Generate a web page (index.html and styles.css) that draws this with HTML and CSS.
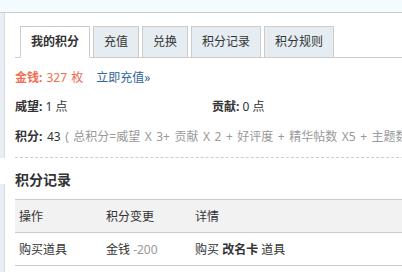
FILE: index.html
```html
<!DOCTYPE html>
<html lang="zh-CN">
<head>
    <meta charset="UTF-8">
    <meta name="viewport" content="width=device-width, initial-scale=1.0">
    <title>我的积分</title>
    <link rel="stylesheet" href="styles.css">
</head>
<body>
    <div class="topbar"></div>
    <div class="wrap">
        <div class="side">
            <div class="side-box first"></div>
            <div class="side-box second"></div>
        </div>
        <div class="main">
            <ul class="tabs">
                <li class="active">我的积分</li>
                <li>充值</li>
                <li>兑换</li>
                <li>积分记录</li>
                <li>积分规则</li>
            </ul>

            <ul class="creditl">
                <li class="money"><em>金钱:</em> 327 枚 <a href="#" class="pay">立即充值»</a></li>
            </ul>
            <ul class="creditl pair">
                <li><em>威望:</em> 1 点</li>
                <li><em>贡献:</em> 0 点</li>
            </ul>
            <ul class="creditl total">
                <li><em>积分:</em> 43 <span class="formula">( 总积分=威望 X 3+ 贡献 X 2 + 好评度 + 精华帖数 X5 + 主题数 X 1 )</span></li>
            </ul>

            <h3 class="section-title">积分记录</h3>
            <table class="logs">
                <colgroup>
                    <col class="c-op">
                    <col class="c-change">
                    <col>
                </colgroup>
                <thead>
                    <tr>
                        <th>操作</th>
                        <th>积分变更</th>
                        <th>详情</th>
                    </tr>
                </thead>
                <tbody>
                    <tr>
                        <td>购买道具</td>
                        <td>金钱 <span class="minus">-200</span></td>
                        <td>购买 <strong>改名卡</strong> 道具</td>
                    </tr>
                </tbody>
            </table>
        </div>
    </div>
</body>
</html>
```

FILE: styles.css
```css
html, body {
    margin: 0;
    padding: 0;
    overflow: hidden;
}
body {
    font-family: "Noto Sans", "Noto Sans CJK SC", sans-serif;
    font-size: 12px;
    color: #333;
    background: #fff;
    width: 402px;
    height: 272px;
}
ul {
    list-style: none;
    margin: 0;
    padding: 0;
}
em {
    font-style: normal;
    font-weight: bold;
}
.topbar {
    height: 12px;
    background: #f3fbfe;
    border-bottom: 1px solid #ccc;
}
.wrap {
    display: flex;
    width: 640px;
}
.side {
    width: 5px;
    flex: none;
    display: flex;
    flex-direction: column;
}
.side-box {
    background: #e8eef4;
    border-right: 1px solid #d4dbe2;
}
.side-box.first {
    height: 145px;
}
.side-box.second {
    margin-top: 26px;
    height: 100px;
}
.main {
    flex: 1;
    padding-left: 10px;
}
.tabs {
    display: flex;
    gap: 3px;
    margin-top: 13px;
    padding-left: 5px;
    border-bottom: 1px solid #ccc;
}
.tabs li {
    height: 30px;
    line-height: 30px;
    padding: 0 10px;
    margin-bottom: -1px;
    background: #e5edf2;
    border: 1px solid #ccc;
}
.tabs li.active {
    background: #fff;
    border-bottom-color: #fff;
    font-weight: bold;
}
.creditl {
    display: flex;
    line-height: 20px;
    white-space: nowrap;
}
.creditl li {
    width: 197px;
}
.money {
    margin-top: 10px;
    color: #f26c4f;
    word-spacing: 1px;
}
.pay {
    color: #369;
    text-decoration: none;
    margin-left: 9px;
}
.pair {
    margin-top: 9px;
}
.total {
    margin-top: 10px;
    padding-bottom: 10px;
    border-bottom: 1px dashed #ccc;
    word-spacing: 1.4px;
}
.total li {
    width: auto;
}
.formula {
    color: #999;
}
.section-title {
    margin: 11px 0 8px;
    font-size: 14px;
    line-height: 22px;
}
.logs {
    width: 100%;
    border-collapse: collapse;
    table-layout: fixed;
}
.c-op {
    width: 87px;
}
.c-change {
    width: 89px;
}
.logs th, .logs td {
    height: 32px;
    padding: 0 4px;
    text-align: left;
    font-weight: normal;
    border-bottom: 1px solid #ccc;
}
.logs th {
    background: #f2f2f2;
    border-top: 1px solid #ccc;
}
.minus {
    color: #999;
}
```
